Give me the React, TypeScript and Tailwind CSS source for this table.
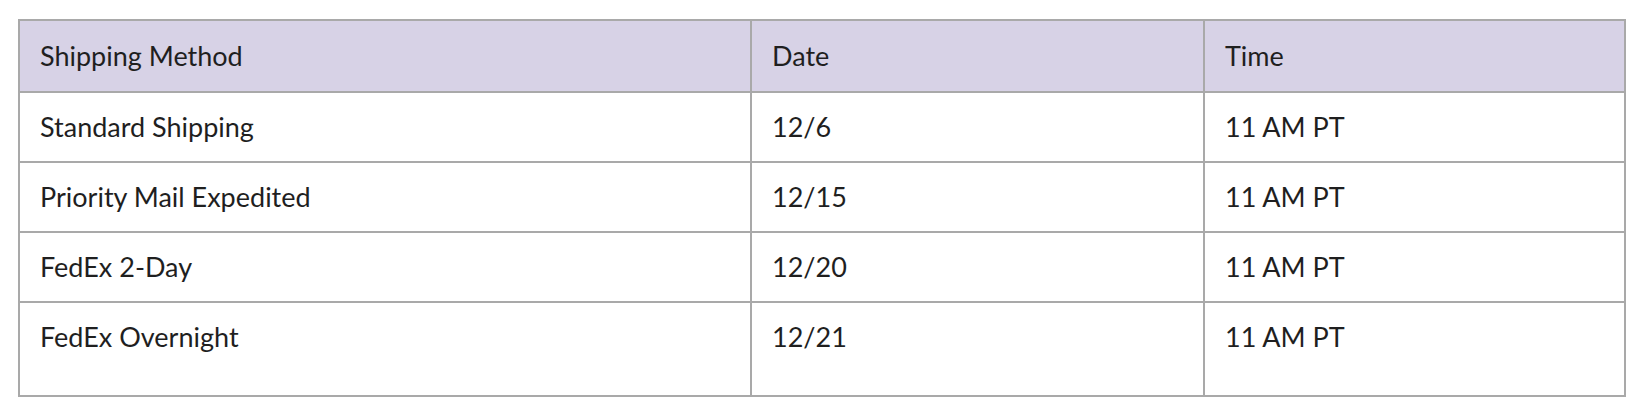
const rows = [
  { method: "Standard Shipping", date: "12/6", time: "11 AM PT" },
  { method: "Priority Mail Expedited", date: "12/15", time: "11 AM PT" },
  { method: "FedEx 2-Day", date: "12/20", time: "11 AM PT" },
  { method: "FedEx Overnight", date: "12/21", time: "11 AM PT" },
];

export default function App() {
  return (
    <div className="w-[1640px] h-[412px] bg-white pl-[18px] pt-[19px] font-['Lato','Liberation_Sans',sans-serif] text-[#1f1f1f]">
      <table className="w-[1608px] border-collapse table-fixed text-[27px] leading-[32px]">
        <colgroup>
          <col className="w-[732px]" />
          <col className="w-[453px]" />
          <col />
        </colgroup>
        <thead>
          <tr className="bg-[#d7d2e6]">
            <th className="h-[72px] border-2 border-[#a9a9a9] pl-[20px] text-left font-normal align-middle">Shipping Method</th>
            <th className="h-[72px] border-2 border-[#a9a9a9] pl-[20px] text-left font-normal align-middle">Date</th>
            <th className="h-[72px] border-2 border-[#a9a9a9] pl-[20px] text-left font-normal align-middle">Time</th>
          </tr>
        </thead>
        <tbody>
          {rows.map((r, i) => {
            const last = i === rows.length - 1;
            const cell = last
              ? "h-[94px] border-2 border-[#a9a9a9] pl-[20px] pb-[24px] align-middle"
              : "h-[70px] border-2 border-[#a9a9a9] pl-[20px] align-middle";
            return (
              <tr key={r.method}>
                <td className={cell}>{r.method}</td>
                <td className={cell}>{r.date}</td>
                <td className={cell}>{r.time}</td>
              </tr>
            );
          })}
        </tbody>
      </table>
    </div>
  );
}
